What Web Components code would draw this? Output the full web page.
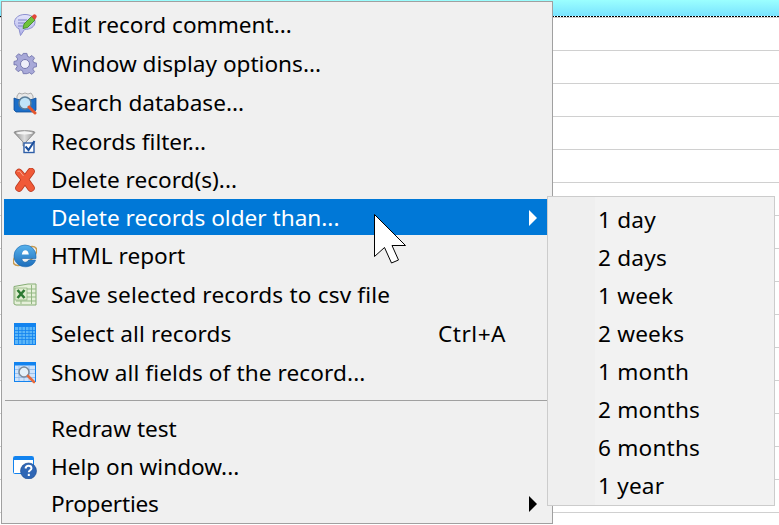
<!DOCTYPE html>
<html>
<head>
<meta charset="utf-8">
<style>
  html, body { margin: 0; padding: 0; background: #fff; }
  body { width: 779px; height: 525px; overflow: hidden; position: relative; font-family: "Noto Sans", "Open Sans", sans-serif; }
</style>
</head>
<body>
<data-grid></data-grid>

<popup-menu class="main">
  <menu-row h="39" icon="comment">Edit record comment...</menu-row>
  <menu-row h="39" icon="gear">Window display options...</menu-row>
  <menu-row h="39" icon="search">Search database...</menu-row>
  <menu-row h="39" icon="filter">Records filter...</menu-row>
  <menu-row h="38" icon="delete">Delete record(s)...</menu-row>
  <menu-row h="36" nudge="2" gap="1" active arrow>Delete records older than...</menu-row>
  <menu-row h="39" icon="ie">HTML report</menu-row>
  <menu-row h="39" icon="excel" style="letter-spacing:.18px">Save selected records to csv file</menu-row>
  <menu-row h="39" icon="grid" shortcut="Ctrl+A" style="letter-spacing:.1px">Select all records</menu-row>
  <menu-row h="39" icon="show" style="letter-spacing:.1px">Show all fields of the record...</menu-row>
  <menu-line></menu-line>
  <menu-row h="38">Redraw test</menu-row>
  <menu-row h="38" icon="help">Help on window...</menu-row>
  <menu-row h="35" arrow style="letter-spacing:-.2px">Properties</menu-row>
</popup-menu>

<popup-menu class="sub">
  <menu-row h="38" sub>1 day</menu-row>
  <menu-row h="38" sub>2 days</menu-row>
  <menu-row h="38" sub>1 week</menu-row>
  <menu-row h="38" sub>2 weeks</menu-row>
  <menu-row h="38" sub>1 month</menu-row>
  <menu-row h="38" sub>2 months</menu-row>
  <menu-row h="38" sub>6 months</menu-row>
  <menu-row h="38" sub>1 year</menu-row>
</popup-menu>

<mouse-pointer></mouse-pointer>

<script>
const ICONS = {
  comment: `
    <defs><linearGradient id="b" x1="0" y1="0" x2="0" y2="1"><stop offset="0" stop-color="#e4e5fb"/><stop offset="1" stop-color="#aeb0ea"/></linearGradient></defs>
    <path d="M12 1.500C6 1.500 1.500 4.800 1.500 9.500c0 3 2 5.200 4.500 6.300L7.500 22.500l4-6c6 0 10.500-2.800 10.500-7.500S17.500 1.500 12 1.500z" fill="url(#b)" stroke="#8d90cf"/>
    <path d="M5 7h9M5 10h7M5 13h5" stroke="#7f82c6" stroke-width="1"/>
    <path d="M10 15.500l1-4.500 7.500-7.500 3.500 3.500-7.500 7.500z" fill="#6fc23c" stroke="#3a8420" stroke-width=".8"/>
    <path d="M18.500 3.500l1.500-1.500a1.500 1.500 0 0 1 3 3L22 7z" fill="#e2483a"/>`,
  gear: `
    <path d="M10 1h4l.7 3.200 2 .9 2.800-1.800 2.800 2.800-1.800 2.800.9 2 3.200.7v3.800l-3.200.7-.9 2 1.800 2.800-2.800 2.800-2.800-1.800-2 .9L14 23h-4l-.7-3.100-2-.9-2.800 1.800-2.800-2.800 1.800-2.800-.9-2L0 13.500V9.700l3.100-.7.9-2-1.800-2.800L5 1.400l2.800 1.800 1.500-.7z" transform="translate(1 .5) scale(.92)" fill="#a8a9d8" stroke="#7577ae"/>
    <circle cx="12" cy="12" r="4.500" fill="#eeeef9" stroke="#7577ae"/>`,
  search: `
    <path d="M4 5l2-3 3 1 3-1 3 1 3-1 2 3v8H4z" fill="#e8e8e8" stroke="#9a9a9a" stroke-width=".8"/>
    <path d="M1 7l4 1.500h14L23 7v12l-2 2H3l-2-2z" fill="#1c6fc9" stroke="#0f4d97" stroke-width=".8"/>
    <circle cx="12" cy="12" r="6" fill="#bfe3f7" stroke="#5d7f99" stroke-width="1.600"/>
    <path d="M16 16l6 6" stroke="#e4572e" stroke-width="3" stroke-linecap="round"/>`,
  filter: `
    <defs><linearGradient id="f" x1="0" y1="0" x2="1" y2="0"><stop offset="0" stop-color="#8b8b8b"/><stop offset=".5" stop-color="#dedede"/><stop offset="1" stop-color="#8f8f8f"/></linearGradient></defs>
    <path d="M1 2.500C1 0 22 0 22 2.500L13 12v4H10v-4z" fill="url(#f)" stroke="#808080" stroke-width=".8"/>
    <ellipse cx="11.500" cy="3" rx="8.500" ry="1.500" fill="#f4f4f4"/>
    <rect x="11" y="13" width="10" height="9.500" fill="#fff" stroke="#2f5fa8" stroke-width="1.400"/>
    <path d="M12.500 16.500l3 3.500 6-9" fill="none" stroke="#1b4f9c" stroke-width="2"/>`,
  delete: `
    <path d="M6 4.500l6 7 6-8M6 20l6-8.500 6 8.500" fill="none" stroke="#b9381d" stroke-width="7.500" stroke-linecap="round" stroke-linejoin="round"/>
    <path d="M6 4.500l6 7 6-8M6 20l6-8.500 6 8.500" fill="none" stroke="#f05a38" stroke-width="6" stroke-linecap="round" stroke-linejoin="round"/>
    <path d="M4.500 3.500l2-.5 4 5" fill="none" stroke="#fba48c" stroke-width="1"/>`,
  ie: `
    <defs><linearGradient id="e" x1="0" y1="0" x2="0" y2="1"><stop offset="0" stop-color="#58b2ec"/><stop offset="1" stop-color="#1d6dbb"/></linearGradient></defs>
    <ellipse cx="12" cy="12" rx="13.500" ry="6.500" transform="rotate(-35 12 12)" fill="none" stroke="#c79a4f" stroke-width="1.500"/>
    <path d="M1 12a11 11 0 0 1 22 0v2.500H8.800c.4 2.500 1.700 3.700 3.400 3.700 1.700 0 2.800-.8 3.300-2.200h7c-1 4-5 6.800-10 6.800C6 22.800 1 18 1 12z" fill="url(#e)" stroke="#1766ae" stroke-width=".6"/>
    <path d="M8.800 10.500C9.200 7.800 10.600 6.300 12.300 6.300s3.300 1.500 3.500 4.200z" fill="#fff"/>`,
  excel: `
    <path d="M1 3.500L15 1h8v21H3l-2-1z" fill="#e6f0da" stroke="#86ad75"/>
    <path d="M14 6h9M14 10h9M14 14h9M14 18h9M18.500 2v19M3 18h11M8 18v3" stroke="#93b883"/>
    <rect x="2" y="5" width="12" height="12" fill="#dfeccf" stroke="#7ea66c" stroke-width=".6"/>
    <path d="M4.500 7l7 8M11.500 7l-7 8" stroke="#2d7a32" stroke-width="2.600"/>`,
  grid: `
    <rect x="1.500" y="1.500" width="21" height="21" fill="#5cb6f7" stroke="#1283ef"/>
    <rect x="2" y="2" width="20" height="3" fill="#1283ef"/>
    <path d="M2 8.500h20M2 11.500h20M2 14.500h20M2 17.500h20M5.500 5v17M9 5v17M12.500 5v17M16 5v17M19.500 5v17" stroke="#1283ef" stroke-width=".8"/>`,
  show: `
    <rect x="1.500" y="1.500" width="21" height="19" fill="#cfe3fa" stroke="#1283ef"/>
    <rect x="2" y="2" width="20" height="2.500" fill="#1283ef"/>
    <path d="M2 8.500h20M2 12.500h20M2 16.500h20M6 4v16M11 4v16M16 4v16" stroke="#8fb9ea" stroke-width=".8"/>
    <circle cx="11" cy="11" r="5" fill="#e4f0f8" stroke="#7b8b9b" stroke-width="1.500"/>
    <path d="M15 15l6 6" stroke="#e56a3c" stroke-width="2.600" stroke-linecap="round"/>`,
  help: `
    <rect x=".5" y="1.500" width="20" height="17" rx="1" fill="#fff" stroke="#1283ef"/>
    <rect x="1" y="2" width="19" height="3" fill="#1283ef"/>
    <circle cx="15.500" cy="16" r="8" fill="#2f66b5" stroke="#1d4a8f" stroke-width=".6"/>
    <path d="M12.500 13.500c.3-2 1.500-2.700 3-2.700 1.700 0 3 1 3 2.500 0 2-2.700 2-2.700 4" fill="none" stroke="#fff" stroke-width="1.900"/>
    <rect x="14.800" y="18.800" width="2" height="2.200" fill="#fff"/>`
};

const gridTemplate = document.createElement('template');
gridTemplate.innerHTML = `
  <style>
    :host { display: flex; flex-direction: column; width: 779px; height: 525px; }
    #head { height: 16px; background: linear-gradient(#9bffff, #79e3ff); }
    #dots { height: 1px; background: repeating-linear-gradient(90deg, #000 0 2px, #fff 2px 3px); }
    #line { height: 1px; background: #d0d0d0; }
    #rows { flex: 1; background: repeating-linear-gradient(#fff 0 32px, #d0d0d0 32px 33px); }
  </style>
  <div id="head"></div>
  <div id="dots"></div>
  <div id="line"></div>
  <div id="rows"></div>
`;

class DataGrid extends HTMLElement {
  constructor() {
    super();
    this.attachShadow({ mode: 'open' }).appendChild(gridTemplate.content.cloneNode(true));
  }
}

const popupTemplate = document.createElement('template');
popupTemplate.innerHTML = `
  <style>
    :host { display: flex; flex-direction: column; position: absolute; box-sizing: border-box; }
    :host(.main) {
      left: 1px; top: 1px; width: 552px; height: 523px;
      padding: 3px 5px 0 2px;
      background: #f0f0f0;
      border: 1px solid #a0a0a0;
    }
    :host(.sub) {
      left: 547px; top: 196px; width: 228px; height: 310px;
      padding: 4px 3px 0 3px;
      letter-spacing: .2px;
      background: linear-gradient(90deg, #efefef 0 47px, #f2f2f2 47px);
      border: 1px solid #cccccc;
    }
  </style>
  <slot></slot>
`;

class PopupMenu extends HTMLElement {
  constructor() {
    super();
    this.attachShadow({ mode: 'open' }).appendChild(popupTemplate.content.cloneNode(true));
  }
}

const lineTemplate = document.createElement('template');
lineTemplate.innerHTML = `
  <style>
    :host { display: block; height: 1px; margin: 8px 0 9px 1px; background: #a0a0a0; }
  </style>
`;

class MenuLine extends HTMLElement {
  constructor() {
    super();
    this.attachShadow({ mode: 'open' }).appendChild(lineTemplate.content.cloneNode(true));
  }
}

const rowTemplate = document.createElement('template');
rowTemplate.innerHTML = `
  <style>
    :host {
      display: flex; align-items: center; box-sizing: border-box; flex: none;
      font: 22.6px/30px "Noto Sans", "Open Sans", sans-serif;
      color: #000; white-space: nowrap;
    }
    :host([active]) { background: #0078d7; color: #fff; }
    #icon { width: 24px; height: 24px; margin: 0 14px 0 9px; flex: none; }
    #icon svg { display: block; }
    :host([sub]) #icon { width: 0; margin: 0 0 0 47px; }
    #label { flex: 1; }
    #shortcut { margin-right: 41px; letter-spacing: .5px; }
    #arrow { width: 8px; height: 16px; margin-right: 10px; flex: none; }
    #arrow svg { display: block; }
    :host([active]) #arrow path { fill: #fff; }
  </style>
  <span id="icon"></span>
  <span id="label"><slot></slot></span>
`;

class MenuRow extends HTMLElement {
  constructor() {
    super();
    const shadowRoot = this.attachShadow({ mode: 'open' });
    shadowRoot.appendChild(rowTemplate.content.cloneNode(true));
  }

  connectedCallback() {
    this.style.height = this.getAttribute('h') + 'px';
    if (this.hasAttribute('nudge')) {
      this.style.paddingTop = this.getAttribute('nudge') + 'px';
    }
    if (this.hasAttribute('gap')) {
      this.style.marginBottom = this.getAttribute('gap') + 'px';
    }

    const name = this.getAttribute('icon');
    if (name) {
      this.shadowRoot.querySelector('#icon').innerHTML =
        `<svg width="24" height="24" viewBox="0 0 24 24">${ICONS[name]}</svg>`;
    }

    const shortcut = this.getAttribute('shortcut');
    if (shortcut) {
      const el = document.createElement('span');
      el.id = 'shortcut';
      el.textContent = shortcut;
      this.shadowRoot.appendChild(el);
    }

    if (this.hasAttribute('arrow')) {
      const el = document.createElement('span');
      el.id = 'arrow';
      el.innerHTML = '<svg width="8" height="16" viewBox="0 0 8 16"><path d="M0 0l8 8-8 8z" fill="#000"/></svg>';
      this.shadowRoot.appendChild(el);
    }
  }
}

const pointerTemplate = document.createElement('template');
pointerTemplate.innerHTML = `
  <style>
    :host { display: block; position: absolute; left: 370px; top: 210px; width: 40px; height: 56px; }
    svg { display: block; }
  </style>
  <svg width="40" height="56" viewBox="0 0 40 56">
    <path d="M4.500 4.500V46.500L14.500 37.500 21.500 53 28.500 50 22 35.500H35.500z" fill="#fff" stroke="#000" stroke-width="1"/>
  </svg>
`;

class MousePointer extends HTMLElement {
  constructor() {
    super();
    this.attachShadow({ mode: 'open' }).appendChild(pointerTemplate.content.cloneNode(true));
  }
}

customElements.define('data-grid', DataGrid);
customElements.define('popup-menu', PopupMenu);
customElements.define('menu-line', MenuLine);
customElements.define('menu-row', MenuRow);
customElements.define('mouse-pointer', MousePointer);
</script>
</body>
</html>
